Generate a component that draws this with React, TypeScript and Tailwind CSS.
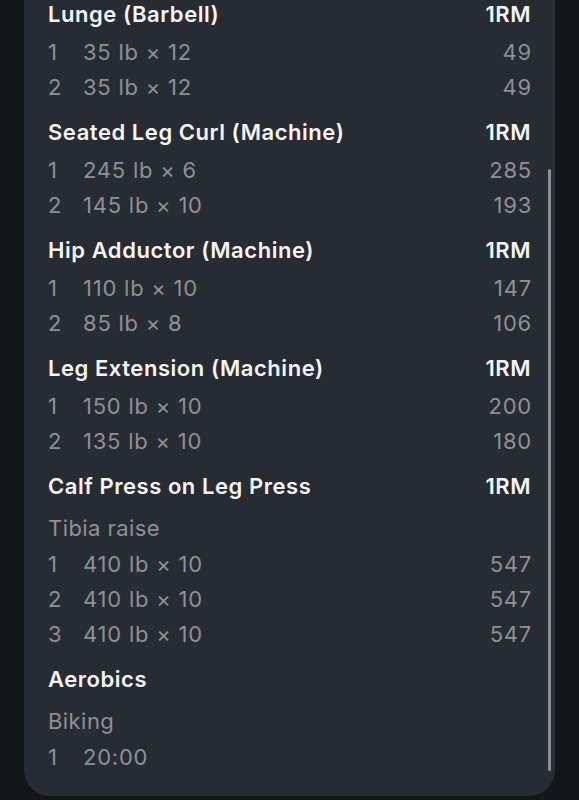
type SetRow = { n: number; text: string; orm?: string };
type Exercise = { name: string; note?: string; showOrm: boolean; sets: SetRow[] };

const exercises: Exercise[] = [
  {
    name: "Lunge (Barbell)",
    showOrm: true,
    sets: [
      { n: 1, text: "35 lb × 12", orm: "49" },
      { n: 2, text: "35 lb × 12", orm: "49" },
    ],
  },
  {
    name: "Seated Leg Curl (Machine)",
    showOrm: true,
    sets: [
      { n: 1, text: "245 lb × 6", orm: "285" },
      { n: 2, text: "145 lb × 10", orm: "193" },
    ],
  },
  {
    name: "Hip Adductor (Machine)",
    showOrm: true,
    sets: [
      { n: 1, text: "110 lb × 10", orm: "147" },
      { n: 2, text: "85 lb × 8", orm: "106" },
    ],
  },
  {
    name: "Leg Extension (Machine)",
    showOrm: true,
    sets: [
      { n: 1, text: "150 lb × 10", orm: "200" },
      { n: 2, text: "135 lb × 10", orm: "180" },
    ],
  },
  {
    name: "Calf Press on Leg Press",
    note: "Tibia raise",
    showOrm: true,
    sets: [
      { n: 1, text: "410 lb × 10", orm: "547" },
      { n: 2, text: "410 lb × 10", orm: "547" },
      { n: 3, text: "410 lb × 10", orm: "547" },
    ],
  },
  {
    name: "Aerobics",
    note: "Biking",
    showOrm: false,
    sets: [{ n: 1, text: "20:00" }],
  },
];

const App = () => {
  return (
    <div
      className="min-h-screen bg-[#14171a] overflow-hidden"
      style={{ fontFamily: "Inter, 'Noto Sans', sans-serif" }}
    >
      <div className="relative mx-[24px] h-[796px] rounded-b-[26px] bg-[#272b32] px-[24px]">
        {exercises.map((ex) => (
          <div key={ex.name} className="mb-[13px]">
            {/* header */}
            <div className="flex h-[28px] items-center justify-between text-[22px] font-semibold tracking-[0.025em] text-[#f4f4f5]">
              <span>{ex.name}</span>
              {ex.showOrm && <span>1RM</span>}
            </div>
            {ex.note && (
              <div className="mt-[9px] flex h-[38px] items-center text-[22px] tracking-[0.02em] text-[#8e9096]">
                {ex.note}
              </div>
            )}
            <div className={ex.note ? "" : "mt-[7px]"}>
              {ex.sets.map((s) => (
                <div
                  key={s.n}
                  className="flex h-[35px] items-center text-[22px] tracking-[0.035em] text-[#8e9096]"
                >
                  <span className="w-[35px]">{s.n}</span>
                  <span className="flex-1">{s.text}</span>
                  {s.orm && <span className="-mr-[1px]">{s.orm}</span>}
                </div>
              ))}
            </div>
          </div>
        ))}

        {/* scroll indicator */}
        <div className="absolute right-[4px] top-[169px] h-[602px] w-[3px] rounded-full bg-[#8c8e93]" />
      </div>
    </div>
  );
};

export default App;
